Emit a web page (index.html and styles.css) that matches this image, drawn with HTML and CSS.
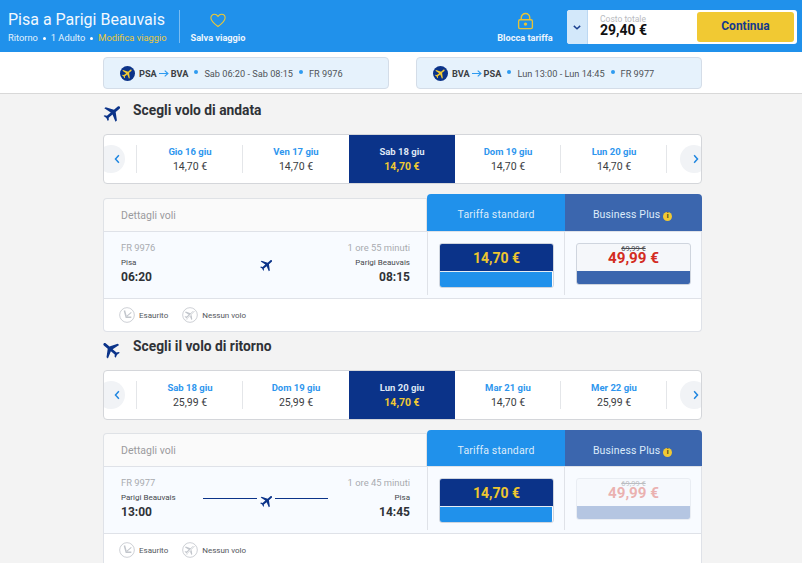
FILE: index.html
```html
<!DOCTYPE html>
<html lang="it">
<head>
<meta charset="utf-8">
<title>Pisa a Parigi Beauvais</title>
<link rel="stylesheet" href="styles.css">
</head>
<body>
<svg class="defs" width="0" height="0" aria-hidden="true">
  <symbol id="plane" viewBox="0 0 24 24"><path d="M21 16v-2l-8-5V3.5c0-.83-.67-1.5-1.5-1.5S10 2.67 10 3.5V9l-8 5v2l8-2.5V19l-2 1.5V22l3.5-1 3.5 1v-1.5L13 19v-5.5l8 2.500z"/></symbol>
  <symbol id="sold" viewBox="0 0 24 24"><circle cx="12" cy="12" r="11" fill="none" stroke="#b4b8c0" stroke-width="1"/><path d="M7 5.500l3 11h8.500v-2.300h-6.700L9.200 5z M11 13.500l7-6 1 1.300-7 6z" fill="#c2c6cc"/></symbol>
  <symbol id="none" viewBox="0 0 24 24"><circle cx="12" cy="12" r="11" fill="none" stroke="#b4b8c0" stroke-width="1"/><g transform="rotate(50 12 12) translate(2.400 2.400) scale(.8)"><path fill="#c2c6cc" d="M21 16v-2l-8-5V3.500c0-.83-.67-1.500-1.500-1.500S10 2.670 10 3.500V9l-8 5v2l8-2.500V19l-2 1.500V22l3.500-1 3.500 1v-1.500L13 19v-5.500l8 2.500z"/></g><path d="M6 19L19 6" stroke="#fff" stroke-width="2"/><path d="M6 19L19 6" stroke="#c2c6cc" stroke-width="1"/></symbol>
</svg>

<header class="topbar">
  <div class="trip">
    <div class="trip-title">Pisa a Parigi Beauvais</div>
    <div class="trip-meta">
      <span>Ritorno</span><i class="dot"></i><span>1 Adulto</span><i class="dot"></i><span class="edit">Modifica viaggio</span>
    </div>
  </div>
  <div class="save">
    <svg class="save-icon" viewBox="0 0 18 16" width="16" height="15"><path d="M9 14.800C4 11 1 8.300 1 5.100 1 2.700 2.800 1 5 1c1.700 0 3 .9 4 2.300C10 1.900 11.300 1 13 1c2.200 0 4 1.700 4 4.100 0 3.200-3 5.900-8 9.700z" fill="none" stroke="#f2c930" stroke-width="1.200"/></svg>
    <span class="top-label">Salva viaggio</span>
  </div>
  <div class="lock">
    <svg viewBox="0 0 18 18" width="17" height="18"><path d="M4.500 8V5.500a4.500 4.500 0 0 1 9 0V8" fill="none" stroke="#e9c335" stroke-width="1.500"/><rect x="1.700" y="7.700" width="14.600" height="9.300" rx="1.500" fill="none" stroke="#e9c335" stroke-width="1.400"/><circle cx="9" cy="12.300" r="1.800" fill="#e9c335"/></svg>
    <span class="top-label">Blocca tariffa</span>
  </div>
  <div class="total">
    <div class="total-toggle"><svg viewBox="0 0 10 6" width="8" height="5"><path d="M1 1l4 3.500L9 1" fill="none" stroke="#1a3f8f" stroke-width="1.800"/></svg></div>
    <div class="total-text"><div class="total-label">Costo totale</div><div class="total-value">29,40 €</div></div>
    <div class="continue">Continua</div>
  </div>
</header>

<nav class="summary">
  <div class="leg">
    <span class="leg-logo"><svg class="leg-plane" viewBox="0 0 24 24" width="13" height="13"><use href="#plane"/></svg></span>
    <b>PSA</b><svg class="arrow" viewBox="0 0 14 10" width="10" height="9"><path d="M0 5h12M8 1l4.500 4L8 9" fill="none" stroke="#2e9bf0" stroke-width="1.600"/></svg><b>BVA</b>
    <i class="leg-dot"></i><span>Sab 06:20 - Sab 08:15</span><i class="leg-dot"></i><span>FR 9976</span>
  </div>
  <div class="leg">
    <span class="leg-logo"><svg class="leg-plane" viewBox="0 0 24 24" width="13" height="13"><use href="#plane"/></svg></span>
    <b>BVA</b><svg class="arrow" viewBox="0 0 14 10" width="10" height="9"><path d="M0 5h12M8 1l4.500 4L8 9" fill="none" stroke="#2e9bf0" stroke-width="1.600"/></svg><b>PSA</b>
    <i class="leg-dot"></i><span>Lun 13:00 - Lun 14:45</span><i class="leg-dot"></i><span>FR 9977</span>
  </div>
</nav>

<main class="content">
  <section class="leg-section outbound">
    <h2 class="section-title"><svg class="title-plane out" viewBox="0 0 24 24" width="22" height="22"><use href="#plane"/></svg>Scegli volo di andata</h2>
    <div class="dates">
      <button class="nav prev"><svg viewBox="0 0 8 12" width="6" height="10"><path d="M6.500 1L2 6l4.500 5" fill="none" stroke="#1f86e0" stroke-width="2"/></svg></button>
      <div class="date"><span class="d">Gio 16 giu</span><span class="p">14,70 €</span></div>
      <div class="date"><span class="d">Ven 17 giu</span><span class="p">14,70 €</span></div>
      <div class="date sel"><span class="d">Sab 18 giu</span><span class="p">14,70 €</span></div>
      <div class="date"><span class="d">Dom 19 giu</span><span class="p">14,70 €</span></div>
      <div class="date"><span class="d">Lun 20 giu</span><span class="p">14,70 €</span></div>
      <button class="nav next"><svg viewBox="0 0 8 12" width="6" height="10"><path d="M1.500 1L6 6l-4.500 5" fill="none" stroke="#1f86e0" stroke-width="2"/></svg></button>
    </div>
    <div class="fares">
      <div class="fares-head">
        <div class="head-left">Dettagli voli</div>
        <div class="tab std">Tariffa standard</div>
        <div class="tab biz">Business Plus <i class="info">i</i></div>
      </div>
      <div class="flight">
        <div class="flight-info">
          <div class="row muted"><span>FR 9976</span><span>1 ore 55 minuti</span></div>
          <div class="row route">
            <div class="end"><span class="city">Pisa</span><span class="time">06:20</span></div>
            <div class="track plain"><svg class="mid-plane" viewBox="0 0 24 24" width="16" height="16"><use href="#plane"/></svg></div>
            <div class="end right"><span class="city">Parigi Beauvais</span><span class="time">08:15</span></div>
          </div>
        </div>
        <div class="cell"><div class="fare chosen"><div class="fare-top"><span class="price">14,70 €</span></div><div class="fare-bar"></div></div></div>
        <div class="cell"><div class="fare plus"><div class="fare-top"><s class="old">69,99 €</s><span class="price">49,99 €</span></div><div class="fare-bar"></div></div></div>
      </div>
      <div class="legend">
        <svg width="16" height="16"><use href="#sold"/></svg><span>Esaurito</span>
        <svg class="second" width="16" height="16"><use href="#none"/></svg><span>Nessun volo</span>
      </div>
    </div>
  </section>

  <section class="leg-section inbound">
    <h2 class="section-title"><svg class="title-plane back" viewBox="0 0 24 24" width="22" height="22"><use href="#plane"/></svg>Scegli il volo di ritorno</h2>
    <div class="dates">
      <button class="nav prev"><svg viewBox="0 0 8 12" width="6" height="10"><path d="M6.500 1L2 6l4.500 5" fill="none" stroke="#1f86e0" stroke-width="2"/></svg></button>
      <div class="date"><span class="d">Sab 18 giu</span><span class="p">25,99 €</span></div>
      <div class="date"><span class="d">Dom 19 giu</span><span class="p">25,99 €</span></div>
      <div class="date sel"><span class="d">Lun 20 giu</span><span class="p">14,70 €</span></div>
      <div class="date"><span class="d">Mar 21 giu</span><span class="p">14,70 €</span></div>
      <div class="date"><span class="d">Mer 22 giu</span><span class="p">25,99 €</span></div>
      <button class="nav next"><svg viewBox="0 0 8 12" width="6" height="10"><path d="M1.500 1L6 6l-4.500 5" fill="none" stroke="#1f86e0" stroke-width="2"/></svg></button>
    </div>
    <div class="fares">
      <div class="fares-head">
        <div class="head-left">Dettagli voli</div>
        <div class="tab std">Tariffa standard</div>
        <div class="tab biz">Business Plus <i class="info">i</i></div>
      </div>
      <div class="flight">
        <div class="flight-info">
          <div class="row muted"><span>FR 9977</span><span>1 ore 45 minuti</span></div>
          <div class="row route">
            <div class="end"><span class="city">Parigi Beauvais</span><span class="time">13:00</span></div>
            <div class="track"><i class="line"></i><svg class="mid-plane" viewBox="0 0 24 24" width="16" height="16"><use href="#plane"/></svg><i class="line"></i></div>
            <div class="end right"><span class="city">Pisa</span><span class="time">14:45</span></div>
          </div>
        </div>
        <div class="cell"><div class="fare chosen"><div class="fare-top"><span class="price">14,70 €</span></div><div class="fare-bar"></div></div></div>
        <div class="cell"><div class="fare plus faded"><div class="fare-top"><s class="old">69,99 €</s><span class="price">49,99 €</span></div><div class="fare-bar"></div></div></div>
      </div>
      <div class="legend">
        <svg width="16" height="16"><use href="#sold"/></svg><span>Esaurito</span>
        <svg class="second" width="16" height="16"><use href="#none"/></svg><span>Nessun volo</span>
      </div>
    </div>
  </section>
</main>
</body>
</html>
```
FILE: styles.css
```css
* { box-sizing: border-box; }
html, body { margin: 0; height: 563px; overflow: hidden; }
body { background: #f3f3f3; font-family: Roboto, "Liberation Sans", sans-serif; color: #2f3237; }
.defs { position: absolute; }

.topbar { height: 52px; background: #2091eb; display: flex; align-items: flex-start; color: #fff; }
.topbar > * { flex: none; }
.trip { width: 180px; height: 33px; margin-top: 10px; padding-left: 8px; border-right: 1px solid #79bcf2; }
.trip-title { font-size: 16px; line-height: 19px; font-weight: 400; color: #f2f8fe; white-space: nowrap; }
.trip-meta { margin-top: 3px; font-size: 9.300px; line-height: 12px; display: flex; align-items: center; gap: 4px; color: #e4f1fc; white-space: nowrap; }
.dot { width: 3px; height: 3px; margin: 1px 1px 0; border-radius: 50%; background: #fff; }
.edit { color: #edc93a; }
.save { width: 74px; margin-left: 1px; padding-top: 13px; display: flex; flex-direction: column; align-items: center; }
.top-label { font-size: 9.200px; line-height: 12px; font-weight: 700; white-space: nowrap; color: #eef6fd; }
.save .top-label { margin-top: 4px; }
.lock { margin-left: 235px; width: 70px; padding-top: 12px; display: flex; flex-direction: column; align-items: center; }
.lock .top-label { margin-top: 2px; }
.total { margin: 10px 0 0 7px; width: 230px; height: 34px; background: #fff; border-radius: 3px; display: flex; overflow: hidden; }
.total-toggle { width: 21px; background: #d3e8fa; border-right: 1px solid #bcd8f2; display: flex; align-items: center; justify-content: center; }
.total-text { width: 109px; padding: 5px 0 0 12px; }
.total-label { font-size: 8.500px; line-height: 8px; color: #b9bbbf; }
.total-value { font-size: 14px; line-height: 14px; font-weight: 700; color: #111; }
.continue { width: 97px; height: 30px; margin-top: 2px; background: #f1c933; border-radius: 3px; color: #143a8c; font-size: 12px; font-weight: 700; line-height: 28px; text-align: center; }

.summary { height: 42px; background: #fff; border-bottom: 1px solid #d8d8d8; padding: 5px 100px 0 103px; display: flex; gap: 27px; }
.leg { width: 286px; height: 32px; background: #e6f2fc; border: 1px solid #d4dde8; border-radius: 4px; display: flex; align-items: center; padding-left: 16px; font-size: 9.200px; color: #4f5358; white-space: nowrap; }
.leg b { font-weight: 700; color: #3c3f45; }
.leg-logo { width: 15px; height: 15px; border-radius: 50%; background: #0b3389; display: flex; align-items: center; justify-content: center; margin-right: 4px; }
.leg-plane { fill: #f1c933; transform: rotate(50deg); }
.arrow { margin: 0 2px; }
.leg-dot { width: 4px; height: 4px; border-radius: 50%; background: #2e9bf0; margin: 0 6px 2px; }

.content { width: 599px; margin-left: 103px; }
.section-title { height: 40px; margin: 0; padding-top: 7px; font-size: 13.800px; line-height: 18px; font-weight: 700; color: #2f3237; display: flex; align-items: flex-start; }
.title-plane { fill: #0b3389; flex: none; }
.out { transform: rotate(50deg); margin: 1px 9px 0 -1px; }
.back { transform: rotate(-50deg); margin: 1px 11px 0 -3px; }
.inbound .section-title { padding-top: 5px; height: 38px; }

.dates { height: 50px; background: #fff; border: 1px solid #d4d6da; border-radius: 4px; display: flex; align-items: stretch; position: relative; padding-left: 33px; overflow: hidden; }
.date { width: 106px; display: flex; flex-direction: column; align-items: center; padding-top: 11px; position: relative; }
.date::before { content: ""; position: absolute; left: -1px; top: 10px; height: 28px; width: 1px; background: #e4e6e9; }
.date:last-of-type::after { content: ""; position: absolute; right: 0; top: 10px; height: 28px; width: 1px; background: #e4e6e9; }
.date.sel::before, .sel + .date::before { display: none; }
.date .d { font-size: 9.500px; line-height: 12px; font-weight: 700; color: #2e96ee; }
.date .p { font-size: 10.500px; line-height: 13px; margin-top: 2px; color: #3a3d42; }
.date.sel { background: #0b3389; }
.date.sel .d { color: #dfe7f5; }
.date.sel .p { color: #f1c933; font-weight: 700; }
.nav { position: absolute; top: 10px; width: 28px; height: 28px; border: 0; padding: 0; border-radius: 50%; background: #f1f3f6; display: flex; align-items: center; justify-content: center; }
.prev { left: -7px; padding-left: 12px; }
.next { right: -7px; padding-left: 4px; }

.fares { margin-top: 10px; }
.fares-head { display: flex; height: 37px; align-items: flex-end; }
.inbound .fares-head { height: 36px; }
.head-left { width: 324px; height: 33px; background: #fafafa; border: 1px solid #dfe2e6; border-bottom: 0; border-radius: 4px 0 0 0; padding-left: 17px; font-size: 10.500px; line-height: 33px; color: #9a9b9e; }
.tab { height: 37px; font-size: 10.500px; line-height: 41px; letter-spacing: .15px; color: #dcebfa; text-align: center; white-space: nowrap; align-self: flex-start; }
.inbound .tab { height: 36px; }
.std { width: 138px; background: #2091eb; border-radius: 4px 0 0 0; }
.biz { width: 137px; padding-right: 2px; background: #3b66ae; border-radius: 0 4px 0 0; }
.info { display: inline-block; width: 9px; height: 9px; border-radius: 50%; background: #f1c933; color: #3b3b20; font-size: 7px; line-height: 9px; font-style: normal; font-weight: 700; text-align: center; vertical-align: 0; letter-spacing: 0; }

.flight { display: flex; height: 68px; background: #f8fbff; border: 1px solid #dfe2e8; }
.flight-info { width: 323px; padding: 10px 17px 0; height: 66px; flex: none; }
.row { display: flex; justify-content: space-between; }
.muted { font-size: 9.400px; line-height: 12px; color: #a9abb0; }
.route { margin-top: 3px; align-items: flex-start; }
.end { display: flex; flex-direction: column; flex: 1; }
.end.right { align-items: flex-end; }
.city { font-size: 8px; line-height: 12px; color: #45484d; white-space: nowrap; }
.time { font-size: 12px; line-height: 15px; font-weight: 700; margin-top: 1px; color: #2f3237; }
.mid-plane { fill: #0b3389; transform: translateX(1px) rotate(50deg); flex: none; margin-top: 1px; }
.plain .mid-plane { margin-top: 0; }
.track { width: 125px; display: flex; justify-content: center; gap: 1px; }
.line { flex: 1; height: 1px; margin-top: 6px; background: #0b3389; }
.cell { width: 137px; height: 63px; border-left: 1px solid #dfe2e8; padding: 11px 0 0 11px; flex: none; }
.fare { width: 115px; border: 1px solid #cfd5de; border-radius: 3px; overflow: hidden; display: flex; flex-direction: column; }
.fare-top { display: flex; flex-direction: column; align-items: center; }
.chosen { height: 45px; }
.chosen .fare-top { height: 28px; background: #0b3389; border-bottom: 1px solid #e8edf3; justify-content: center; }
.chosen .price { font-size: 14px; font-weight: 700; color: #eec62f; }
.chosen .fare-bar { flex: 1; background: #2091eb; margin-right: 1px; }
.plus { height: 42px; background: #f5f7fa; }
.plus .fare-top { height: 27px; padding-top: 1px; }
.old { font-size: 7.500px; line-height: 7px; color: #4a4c50; }
.plus .price { font-size: 15.200px; line-height: 13px; font-weight: 700; color: #d32b21; }
.plus .fare-bar { flex: 1; background: #3b66ae; }
.faded { opacity: .35; }

.legend { height: 33px; background: #fff; border: 1px solid #dfe2e8; border-top: 0; border-radius: 0 0 4px 4px; display: flex; align-items: center; padding-left: 15px; font-size: 8px; color: #54575c; }
.legend span { margin-left: 4px; }
.legend .second { margin-left: 14px; }
```
